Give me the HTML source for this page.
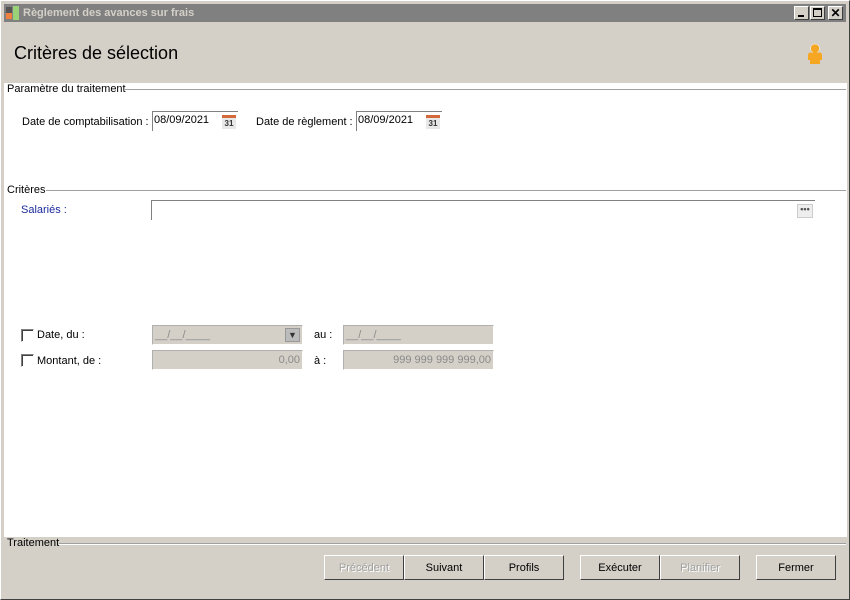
<!DOCTYPE html>
<html><head><meta charset="utf-8"><style>
*{margin:0;padding:0;box-sizing:border-box}
body{width:850px;height:600px;background:#d4d0c8;font-family:"Liberation Sans",sans-serif;font-size:11px;color:#000;position:relative;overflow:hidden}
.a{position:absolute}
.win{left:0;top:0;width:850px;height:600px;border:1px solid #fff;border-right-color:#404040;border-bottom-color:#404040}
.title{left:4px;top:4px;width:842px;height:18px;background:#808080;color:#d4d0c8;font-weight:bold;font-size:11px;line-height:18px}
.tb{top:6px;width:15px;height:14px;background:#d4d0c8;border:1px solid #fff;border-right-color:#404040;border-bottom-color:#404040}
.white{left:4px;top:83px;width:843px;height:454px;background:#fff}
.hl{height:2px;border-top:1px solid #a0a0a0;border-bottom:1px solid #fff}
.inp{background:#fff;border-left:1px solid #808080;border-top:1px solid #808080;height:20px;line-height:16px;padding-left:1px}
.dis{background:#d4d0c8;border:1px solid #b0b0b0;border-right-color:#fff;border-bottom-color:#fff;height:20px;color:#8a8a8a;line-height:18px;padding:0 2px}
.cal{width:14px;height:14px;background:#e8e8e8;border-top:3px solid #d46a3a;font-size:8px;font-weight:bold;color:#333;text-align:center;line-height:11px}
.cb{width:13px;height:13px;border:1px solid #fff;border-top-color:#808080;border-left-color:#808080;background:#fff;box-shadow:inset 1px 1px 0 #404040}
.btn{top:555px;height:25px;width:80px;background:#d4d0c8;border:1px solid #fff;border-right-color:#404040;border-bottom-color:#404040;text-align:center;line-height:25px;font-size:11px}
.gr{color:#a0a0a0;text-shadow:1px 1px 0 #fff}
.t{line-height:13px}
</style></head><body>
<div class="a win"></div>
<div class="a title"><span class="a" style="left:2px;top:3px;width:6px;height:12px;background:#555"></span><span class="a" style="left:2px;top:9px;width:6px;height:6px;background:#f08040"></span><span class="a" style="left:9px;top:2px;width:6px;height:14px;background:#9ad27a"></span><span style="padding-left:19px">Règlement des avances sur frais</span></div>
<div class="a tb" style="left:794px"><span class="a" style="left:3px;top:8px;width:6px;height:2px;background:#000"></span></div>
<div class="a tb" style="left:810px"><span class="a" style="left:2px;top:1px;width:9px;height:9px;border:1px solid #000;border-top-width:2px"></span></div>
<div class="a tb" style="left:828px;font-size:12px;font-weight:bold;text-align:center;line-height:12px">✕</div>
<div class="a" style="left:14px;top:43px;font-size:18px">Critères de sélection</div>
<svg class="a" style="left:806px;top:43px" width="18" height="22"><circle cx="9" cy="5.5" r="4.5" fill="#f5a623" stroke="#fff" stroke-width=".5"/><path d="M2 12 Q2 9.5 5 9.5 H13 Q16 9.5 16 12 V17 H14 V21 H4 V17 H2Z" fill="#f5a623"/></svg>
<div class="a white"></div>
<div class="a t" style="left:7px;top:83px;background:#fff;padding-right:4px">Paramètre du traitement</div>
<div class="a hl" style="left:125px;top:89px;width:721px"></div>
<div class="a t" style="left:22px;top:116px">Date de comptabilisation :</div>
<div class="a inp" style="left:152px;top:111px;width:86px">08/09/2021</div>
<div class="a cal" style="left:222px;top:115px">31</div>
<div class="a t" style="left:256px;top:116px">Date de règlement :</div>
<div class="a inp" style="left:356px;top:111px;width:86px">08/09/2021</div>
<div class="a cal" style="left:426px;top:115px">31</div>
<div class="a t" style="left:7px;top:184px;background:#fff;padding-right:3px">Critères</div>
<div class="a hl" style="left:46px;top:190px;width:800px"></div>
<div class="a t" style="left:21px;top:204px;color:#1a2a9a">Salariés :</div>
<div class="a inp" style="left:151px;top:200px;width:664px"></div>
<div class="a" style="left:797px;top:204px;width:16px;height:14px;background:#eee;border:1px solid #ccc;font-size:9px;text-align:center;line-height:9px;font-weight:bold;color:#555">•••</div>
<div class="a cb" style="left:21px;top:329px"></div>
<div class="a t" style="left:37px;top:329px">Date, du :</div>
<div class="a dis" style="left:152px;top:325px;width:151px">__/__/____</div>
<div class="a" style="left:285px;top:328px;width:15px;height:14px;background:#bbb;border:1px solid #999;text-align:center;font-size:9px;line-height:12px;color:#333">▼</div>
<div class="a t" style="left:314px;top:329px">au :</div>
<div class="a dis" style="left:343px;top:325px;width:151px">__/__/____</div>
<div class="a cb" style="left:21px;top:354px"></div>
<div class="a t" style="left:37px;top:355px">Montant, de :</div>
<div class="a dis" style="left:152px;top:350px;width:151px;text-align:right">0,00</div>
<div class="a t" style="left:314px;top:355px">à :</div>
<div class="a dis" style="left:343px;top:350px;width:151px;text-align:right">999 999 999 999,00</div>
<div class="a t" style="left:7px;top:537px;padding-right:2px">Traitement</div>
<div class="a hl" style="left:59px;top:543px;width:787px"></div>
<div class="a btn gr" style="left:324px">Précédent</div>
<div class="a btn" style="left:404px">Suivant</div>
<div class="a btn" style="left:484px">Profils</div>
<div class="a btn" style="left:580px">Exécuter</div>
<div class="a btn gr" style="left:660px">Planifier</div>
<div class="a btn" style="left:756px">Fermer</div>
</body></html>
